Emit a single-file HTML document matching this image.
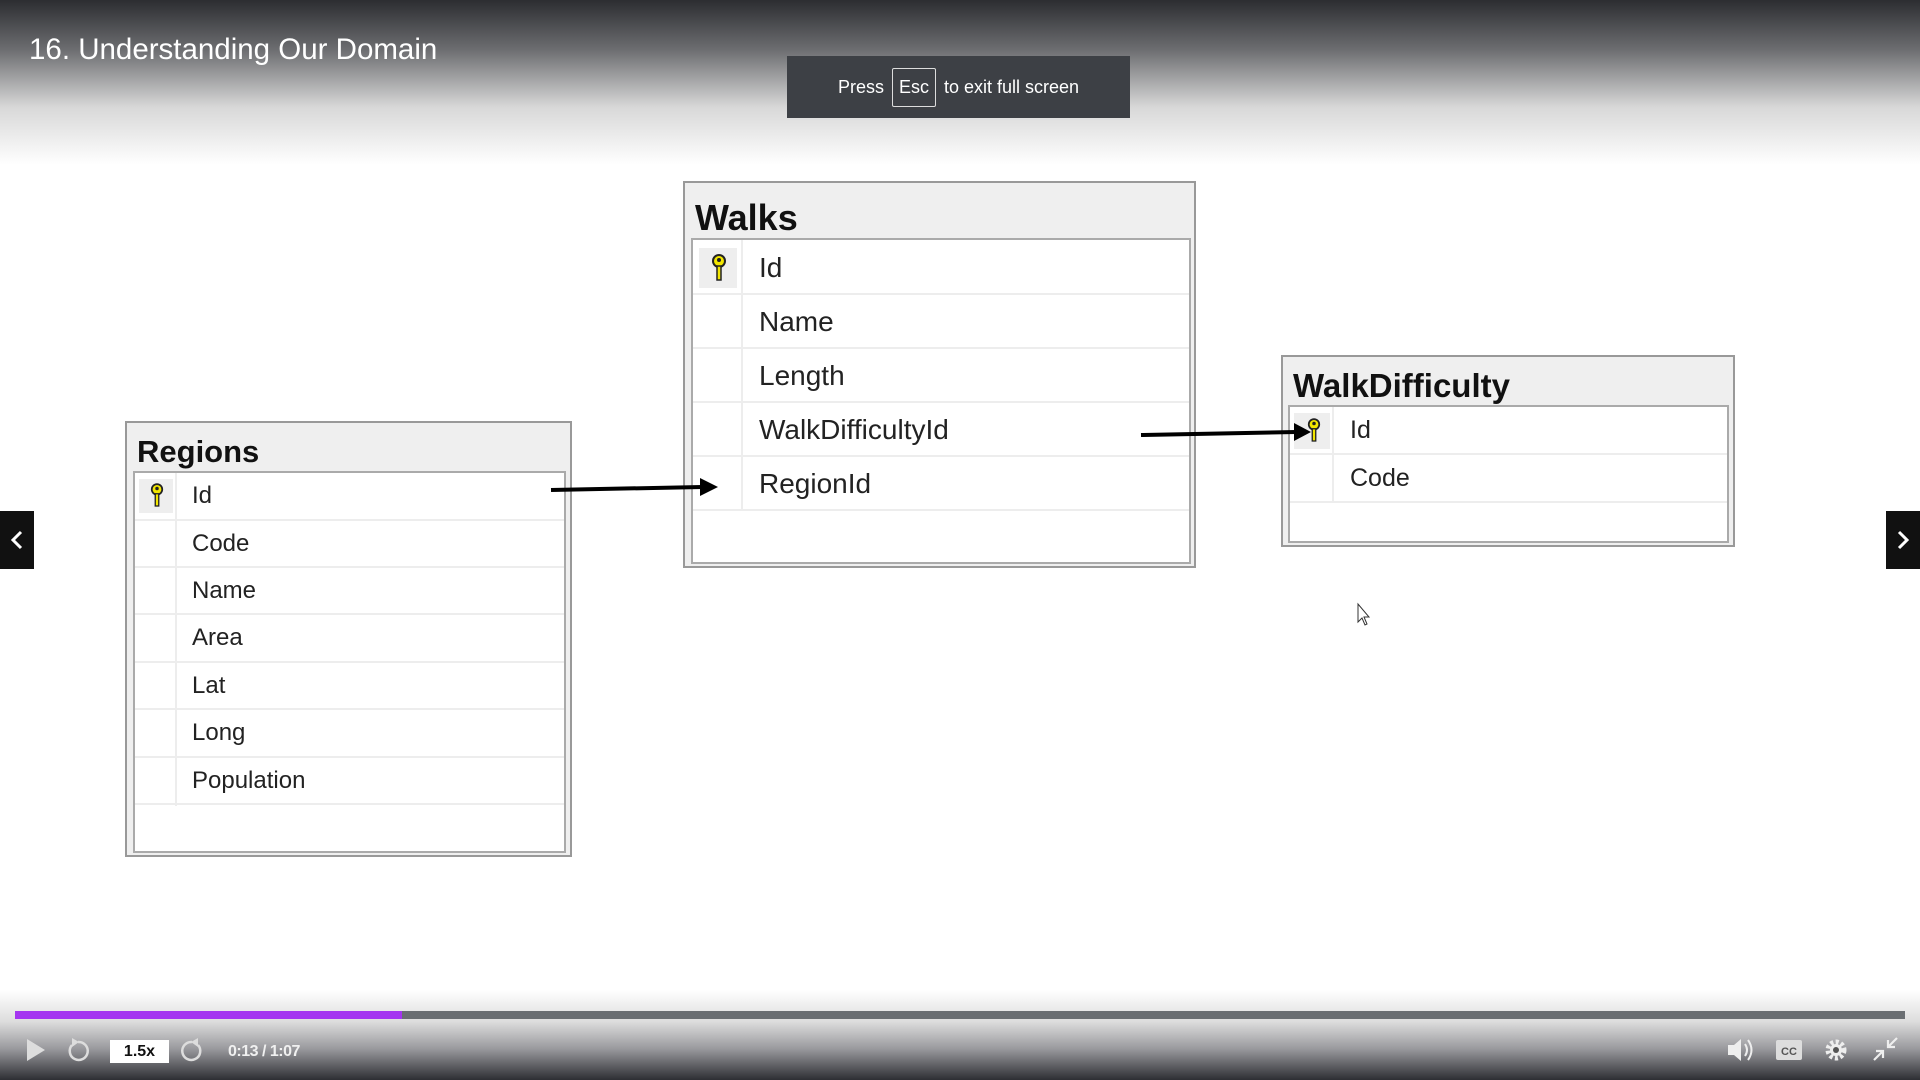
<!DOCTYPE html>
<html><head><style>
*{margin:0;padding:0;box-sizing:border-box}
body{width:1920px;height:1080px;background:#fff;position:relative;overflow:hidden;font-family:"Liberation Sans",sans-serif}
.abs{position:absolute}
.top{left:0;top:0;width:1920px;height:165px;background:linear-gradient(#2c2d31 0%,#6c6d70 30%,#d8d8d8 65%,#fff 100%)}
.title{left:29px;top:33px;color:#fff;font-size:29.5px}
.esc{left:787px;top:56px;width:343px;height:62px;background:#3d4045;color:#fff;font-size:18px;display:flex;align-items:center;justify-content:center;gap:8px}
.esc span{border:1px solid #ddd;padding:8px 6px;border-radius:2px}
.tbl{position:absolute;border:2px solid #999;background:#efefef}
.tbl .h{position:absolute;left:10px;font-weight:bold;color:#111}
.in{position:absolute;border:2px solid #aaa;background:#fff}
.row{position:absolute;left:0;right:0;border-bottom:2px solid #ededed;color:#222}
.kc{position:absolute;left:0;top:0;bottom:0;border-right:2px solid #ededed}
.key{position:absolute;background:#eee}
.nav{background:#111;width:34px;height:58px;top:511px}
.bot{left:0;top:990px;width:1920px;height:90px;background:linear-gradient(#fff 0%,#ddd 35%,#9a9a9e 65%,#2d2e33 100%)}
.ctl{color:#f0f0f0;font-weight:bold}
</style></head><body>
<div class="abs top"></div>
<div class="abs title">16. Understanding Our Domain</div>
<div class="abs esc">Press <span>Esc</span> to exit full screen</div>

<!-- Walks -->
<div class="tbl" style="left:683px;top:181px;width:513px;height:387px">
<div class="h" style="top:14px;font-size:36px">Walks</div>
<div class="in" style="left:6px;top:55px;width:500px;height:326px">
<div class="kc" style="width:50px;height:270px"></div>
<div class="key" style="left:6px;top:8px;width:38px;height:40px"></div>
<svg class="abs" style="left:18px;top:14px" width="16" height="28" viewBox="0 0 16 28"><circle cx="8" cy="7" r="6" fill="#f2e600" stroke="#222" stroke-width="2"/><rect x="6" y="12" width="4" height="14" fill="#f2e600" stroke="#222" stroke-width="1.5"/><circle cx="8" cy="6" r="2" fill="#222"/></svg>
<div class="row" style="top:0;height:55px;font-size:28px;line-height:55px;padding-left:66px">Id</div>
<div class="row" style="top:55px;height:54px;font-size:28px;line-height:54px;padding-left:66px">Name</div>
<div class="row" style="top:109px;height:54px;font-size:28px;line-height:54px;padding-left:66px">Length</div>
<div class="row" style="top:163px;height:54px;font-size:28px;line-height:54px;padding-left:66px">WalkDifficultyId</div>
<div class="row" style="top:217px;height:54px;font-size:28px;line-height:54px;padding-left:66px">RegionId</div>
</div></div>

<!-- Regions -->
<div class="tbl" style="left:125px;top:421px;width:447px;height:436px">
<div class="h" style="top:11px;font-size:31px">Regions</div>
<div class="in" style="left:6px;top:48px;width:433px;height:382px">
<div class="kc" style="width:42px;height:333px"></div>
<div class="key" style="left:4px;top:6px;width:34px;height:34px"></div>
<svg class="abs" style="left:15px;top:10px" width="14" height="25" viewBox="0 0 16 28"><circle cx="8" cy="7" r="6" fill="#f2e600" stroke="#222" stroke-width="2"/><rect x="6" y="12" width="4" height="14" fill="#f2e600" stroke="#222" stroke-width="1.5"/><circle cx="8" cy="6" r="2" fill="#222"/></svg>
<div class="row" style="top:0;height:48px;font-size:24px;line-height:46px;padding-left:57px">Id</div>
<div class="row" style="top:48px;height:47px;font-size:24px;line-height:46px;padding-left:57px">Code</div>
<div class="row" style="top:95px;height:47px;font-size:24px;line-height:46px;padding-left:57px">Name</div>
<div class="row" style="top:142px;height:48px;font-size:24px;line-height:46px;padding-left:57px">Area</div>
<div class="row" style="top:190px;height:47px;font-size:24px;line-height:46px;padding-left:57px">Lat</div>
<div class="row" style="top:237px;height:48px;font-size:24px;line-height:46px;padding-left:57px">Long</div>
<div class="row" style="top:285px;height:47px;font-size:24px;line-height:46px;padding-left:57px">Population</div>
</div></div>

<!-- WalkDifficulty -->
<div class="tbl" style="left:1281px;top:355px;width:454px;height:192px">
<div class="h" style="top:10px;font-size:33px">WalkDifficulty</div>
<div class="in" style="left:5px;top:48px;width:441px;height:138px">
<div class="kc" style="width:44px;height:96px"></div>
<div class="key" style="left:4px;top:6px;width:36px;height:36px"></div>
<svg class="abs" style="left:17px;top:11px" width="14" height="25" viewBox="0 0 16 28"><circle cx="8" cy="7" r="6" fill="#f2e600" stroke="#222" stroke-width="2"/><rect x="6" y="12" width="4" height="14" fill="#f2e600" stroke="#222" stroke-width="1.5"/><circle cx="8" cy="6" r="2" fill="#222"/></svg>
<div class="row" style="top:0;height:48px;font-size:25px;line-height:46px;padding-left:60px">Id</div>
<div class="row" style="top:48px;height:48px;font-size:25px;line-height:46px;padding-left:60px">Code</div>
</div></div>

<svg class="abs" style="left:0;top:0" width="1920" height="1080">
<line x1="551" y1="490" x2="702" y2="487" stroke="#000" stroke-width="4"/>
<polygon points="700,478 718,487 700,496" fill="#000"/>
<line x1="1141" y1="435" x2="1296" y2="432" stroke="#000" stroke-width="4"/>
<polygon points="1294,423 1311,432 1294,441" fill="#000"/>
<path d="M1358,604 l0,18 l4,-4 l3,7 l2,-1 l-3,-7 l5,0 z" fill="#fff" stroke="#333" stroke-width="1"/>
</svg>

<div class="abs nav" style="left:0"><svg width="34" height="58"><path d="M21,21 l-8,8 l8,8" stroke="#fff" stroke-width="3" fill="none"/></svg></div>
<div class="abs nav" style="left:1886px"><svg width="34" height="58"><path d="M13,21 l8,8 l-8,8" stroke="#fff" stroke-width="3" fill="none"/></svg></div>

<div class="abs bot"></div>
<div class="abs" style="left:15px;top:1011px;width:1890px;height:8px;background:#6a6e72"></div>
<div class="abs" style="left:15px;top:1011px;width:387px;height:8px;background:#a435f0"></div>
<svg class="abs" style="left:0;top:1030px" width="1920" height="45">
<polygon points="27,9 45,20 27,31" fill="#ddd"/>
<path d="M78,12 a9,9 0 1 1 -6,3" fill="none" stroke="#ddd" stroke-width="2.5"/><polygon points="72,8 79,12 72,17" fill="#ddd"/>
<path d="M192,12 a9,9 0 1 0 6,3" fill="none" stroke="#ddd" stroke-width="2.5"/><polygon points="198,8 191,12 198,17" fill="#ddd"/>
<polygon points="1728,15 1734,15 1741,9 1741,31 1734,25 1728,25" fill="#eee"/>
<path d="M1745,14 q4,6 0,12 M1748,10 q7,10 0,20" fill="none" stroke="#eee" stroke-width="2"/>
<rect x="1776" y="10" width="26" height="20" rx="2" fill="#ddd"/>
<text x="1789" y="25" font-size="11" font-weight="bold" text-anchor="middle" fill="#555" font-family="Liberation Sans">CC</text>
<circle cx="1836" cy="20" r="8" fill="none" stroke="#eee" stroke-width="5" stroke-dasharray="3 2.3"/><circle cx="1836" cy="20" r="6" fill="#eee"/><circle cx="1836" cy="20" r="3" fill="#555"/>
<path d="M1874,30 l9,-9 M1876,21 l7,0 l0,7 M1897,8 l-9,9 M1888,10 l0,7 l7,0" stroke="#eee" stroke-width="2.2" fill="none"/>
</svg>
<div class="abs" style="left:110px;top:1040px;width:59px;height:23px;background:#fff;color:#111;font-weight:bold;font-size:16px;text-align:center;line-height:23px">1.5x</div>
<div class="abs ctl" style="left:228px;top:1040px;font-size:16px;line-height:23px;letter-spacing:-0.5px">0:13 / 1:07</div>
</body></html>
